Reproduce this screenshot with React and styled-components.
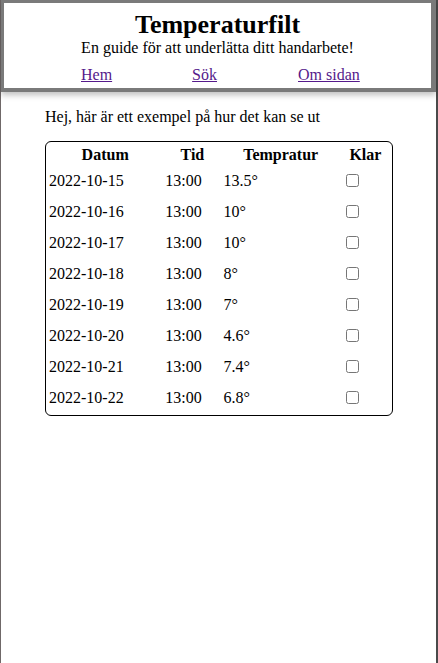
import styled, { createGlobalStyle } from 'styled-components';

const GlobalStyle = createGlobalStyle`
  body {
    margin: 0;
    font-family: "Liberation Serif", "Times New Roman", serif;
    font-size: 16px;
    color: #000;
    background: #fff;
  }
`

const Page = styled.div`
  min-height: 100vh;
  box-sizing: border-box;
  border-left: 1px solid #6f6868;
  border-right: 2px solid #4a4a4a;
`

const Header = styled.header`
  display: flex;
  flex-direction: column;
  align-items: center;

  height: 85px;
  box-sizing: content-box;
  border: 3px solid #7a7a7a;
  border-right-width: 5px;
  border-bottom-width: 4px;
  box-shadow: 0 3px 6px rgba(0, 0, 0, 0.25);
`

const Title = styled.h1`
  margin: 8px 0 0;
  font-size: 26px;
  line-height: 28px;
  font-weight: 700;
`

const Subtitle = styled.p`
  margin: 0;
  font-size: 16px;
  line-height: 18px;
`

const Nav = styled.nav`
  display: flex;
  align-self: stretch;
  margin-top: 9px;
  padding-left: 77px;
  line-height: 18px;
`

const NavLink = styled.a`
  color: #551a8b;
  text-decoration: underline;
  margin-right: ${p => p.$gap}px;
`

const Main = styled.main`
  padding: 0 44px;
`

const Intro = styled.p`
  margin: 16px 0 15px;
  line-height: 18px;
`

const Table = styled.table`
  border: 1px solid #000;
  border-radius: 6px;
  border-spacing: 2px;
  width: 348px;
`

const Th = styled.th`
  padding: 1px;
  line-height: 19px;
  font-weight: 700;
  text-align: center;
  width: ${p => p.$w}px;
`

const Td = styled.td`
  padding: 4px 1px 6px;
  line-height: 19px;
  text-align: left;
  vertical-align: middle;
`

const Check = styled.input`
  margin: 3px 3px 3px 4px;
  width: 13px;
  height: 13px;
  vertical-align: top;
`

const rows = [
  ['2022-10-15', '13:00', '13.5°'],
  ['2022-10-16', '13:00', '10°'],
  ['2022-10-17', '13:00', '10°'],
  ['2022-10-18', '13:00', '8°'],
  ['2022-10-19', '13:00', '7°'],
  ['2022-10-20', '13:00', '4.6°'],
  ['2022-10-21', '13:00', '7.4°'],
  ['2022-10-22', '13:00', '6.8°'],
]

export default function App() {
  return (
    <Page>
      <GlobalStyle />
      <Header>
        <Title>Temperaturfilt</Title>
        <Subtitle>En guide för att underlätta ditt handarbete!</Subtitle>
        <Nav>
          <NavLink href="#" $gap={80}>Hem</NavLink>
          <NavLink href="#" $gap={81}>Sök</NavLink>
          <NavLink href="#" $gap={0}>Om sidan</NavLink>
        </Nav>
      </Header>

      <Main>
        <Intro>Hej, här är ett exempel på hur det kan se ut</Intro>
        <Table>
          <thead>
            <tr>
              <Th $w={112}>Datum</Th>
              <Th $w={54}>Tid</Th>
              <Th $w={114}>Tempratur</Th>
              <Th $w={47}>Klar</Th>
            </tr>
          </thead>
          <tbody>
            {rows.map(r => (
              <tr key={r[0]}>
                <Td>{r[0]}</Td>
                <Td>{r[1]}</Td>
                <Td>{r[2]}</Td>
                <Td><Check type="checkbox" /></Td>
              </tr>
            ))}
          </tbody>
        </Table>
      </Main>
    </Page>
  );
}
